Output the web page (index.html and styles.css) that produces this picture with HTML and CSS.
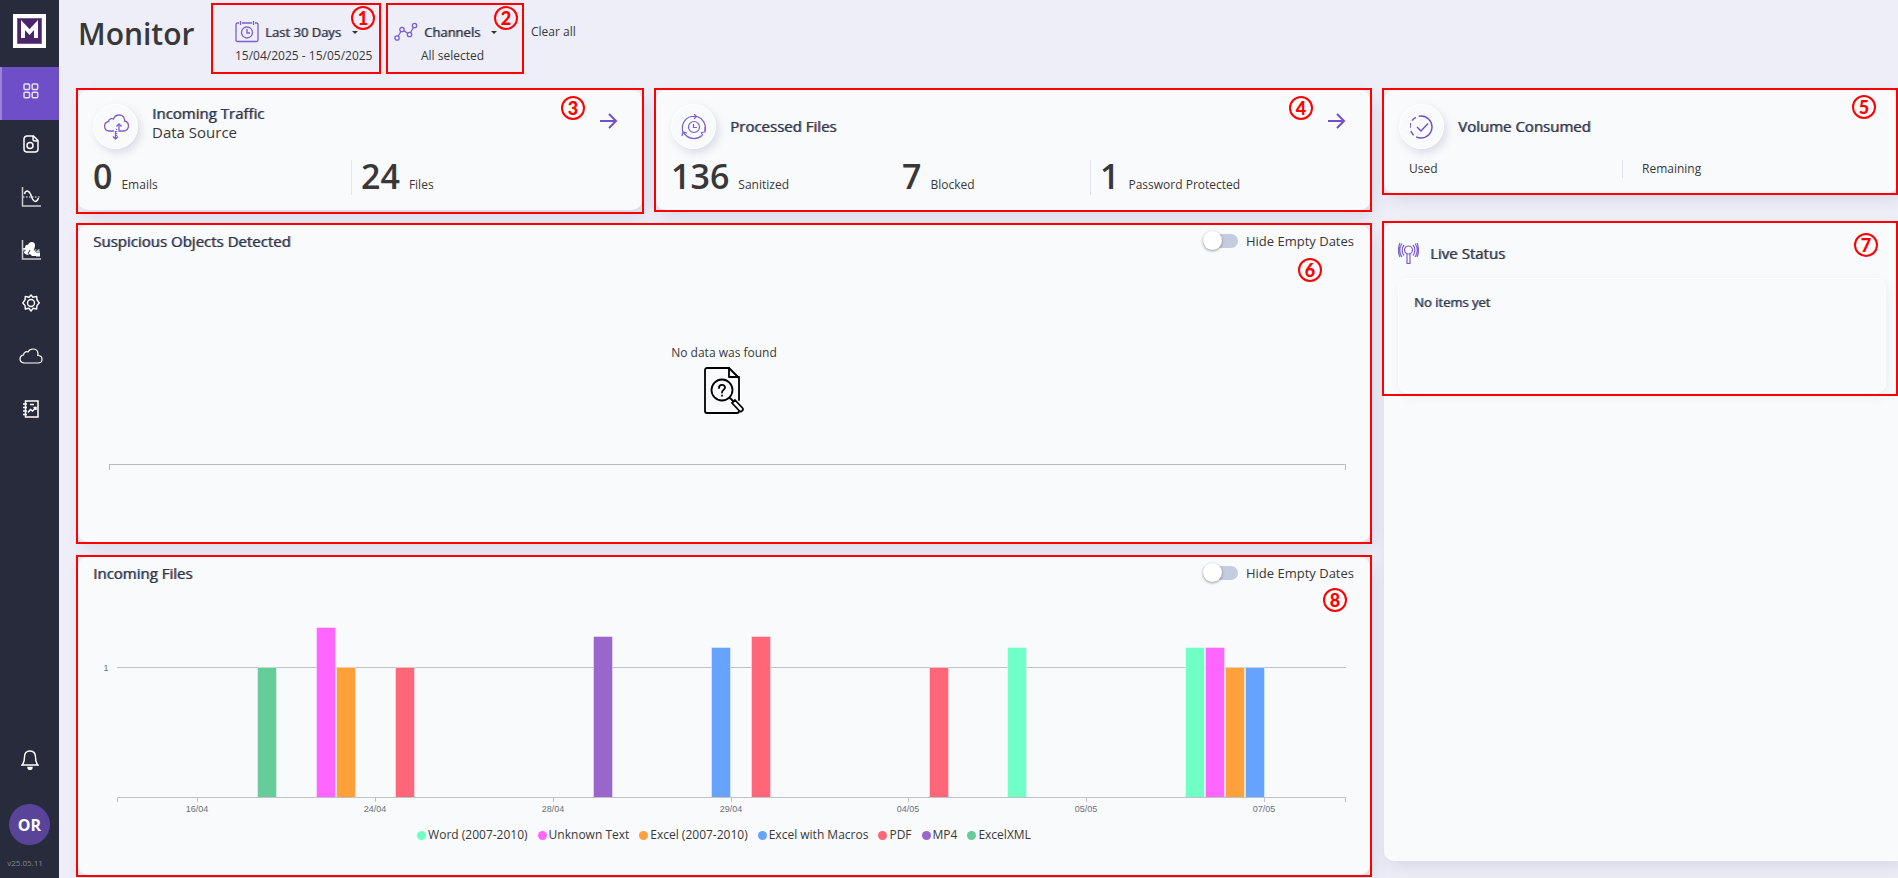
FILE: index.html
```html
<!DOCTYPE html>
<html lang="en">
<head>
    <meta charset="UTF-8">
    <meta name="viewport" content="width=device-width, initial-scale=1.0">
    <title>Monitor</title>
    <link rel="stylesheet" href="styles.css">
</head>
<body>
<nav class="sidebar">
    <a href="#" class="logo" aria-label="Home">
        <svg width="33" height="34" viewBox="0 0 33 34">
            <rect width="33" height="34" fill="#fff"/>
            <rect x="4" y="4" width="25" height="26" fill="#7d5b92"/>
            <rect x="5" y="5" width="23" height="24" fill="#4b2569"/>
            <path d="M10 24V11l6.500 7 6.500-7v13" fill="none" stroke="#fff" stroke-width="4"/>
        </svg>
    </a>
    <a href="#" class="nav-item active" aria-label="Monitor">
        <svg width="16" height="16" viewBox="0 0 16 16" fill="none" stroke="#e6def7" stroke-width="1.500">
            <rect x="1" y="1" width="5.500" height="5.500" rx="1"/>
            <rect x="9.200" y="1" width="5.500" height="5.500" rx="1"/>
            <rect x="1" y="9.200" width="5.500" height="5.500" rx="1"/>
            <rect x="9.200" y="9.200" width="5.500" height="5.500" rx="1"/>
        </svg>
    </a>
    <a href="#" class="nav-item" aria-label="Files">
        <svg width="16" height="18" viewBox="0 0 16 18" fill="none" stroke="#fff" stroke-width="1.500">
            <path d="M4 1h6.500L15 5.500V14a3 3 0 0 1-3 3H4a3 3 0 0 1-3-3V4a3 3 0 0 1 3-3z"/>
            <path d="M10 1v3a2 2 0 0 0 2 2h3"/>
            <circle cx="7" cy="10.500" r="3"/>
        </svg>
    </a>
    <a href="#" class="nav-item" aria-label="Analytics">
        <svg width="20" height="20" viewBox="0 0 20 20" fill="none" stroke="#fff">
            <path d="M1.500 0v19H20" stroke-width="1.500" stroke="#c9cad0"/>
            <path d="M2 10h18" stroke-dasharray="1.500 1.500"/>
            <path d="M3.500 7c1-4 4-4 6 0l2 5c1.500 3 4 4 6-1" stroke-width="1.500"/>
        </svg>
    </a>
    <a href="#" class="nav-item" aria-label="User report">
        <svg width="20" height="20" viewBox="0 0 20 20" fill="none" stroke="#fff">
            <path d="M1.500 0v19H20" stroke-width="1.500" stroke="#c9cad0"/>
            <path d="M2 10h18" stroke-dasharray="1.500 1.500"/>
            <path d="M4 8c0-3 2-4 3-3 1-4 7-4 7 0 0 2-1 4-1 5l2 2v4h-4l-2-2-3 1-3-2c0-2 1-2 2-3-2 0-3-1-3-2z" fill="#fff" stroke="none"/>
            <path d="M9 10l-2 4" stroke="#282b3c"/>
            <rect x="15" y="13" width="4" height="3.500" fill="#fff" stroke="none"/>
            <path d="M16 13v-2h2v2"/>
        </svg>
    </a>
    <a href="#" class="nav-item" aria-label="Settings">
        <svg width="18" height="18" viewBox="0 0 18 18" fill="none" stroke="#fff" stroke-width="1.400" stroke-linejoin="round">
            <path d="M9 1l2 2.300 3.700-.9.200 3.200L17.200 9l-2.300 2.600-.2 3.400-3.700-.7L9 17l-2-2.700-3.700.7-.2-3.400L.8 9l2.300-3.400.2-3.200 3.700.9z"/>
            <circle cx="9" cy="9" r="3.500"/>
        </svg>
    </a>
    <a href="#" class="nav-item" aria-label="Cloud">
        <svg width="24" height="16" viewBox="0 0 24 16" fill="none" stroke="#fff" stroke-width="1.200">
            <path d="M5.500 15C2.500 15 1 13 1 11s1.500-4 3.500-4C4.500 4.500 7 3 9 4c1-2 3-3 5-3 3 0 5 2 5 5 0 .5 0 1-.2 1.500C21.500 7.500 23 9 23 11.200S21.500 15 19 15z"/>
        </svg>
    </a>
    <a href="#" class="nav-item" aria-label="Reports">
        <svg width="16" height="18" viewBox="0 0 16 18" fill="none" stroke="#fff" stroke-width="1.500">
            <rect x="2.500" y="1" width="12.500" height="16"/>
            <path d="M0 4h4M0 7.500h4M0 11h4M0 14.500h4M7 4.500h4"/>
            <path d="M5 12.500l2.500-3 2 1.500L13 7.500M10.500 7.500H13V10"/>
        </svg>
    </a>
    <div class="sidebar-bottom">
        <a href="#" class="bell" aria-label="Notifications">
            <svg width="18" height="20" viewBox="0 0 18 20" fill="none" stroke="#fff" stroke-width="1.400">
                <path d="M1 15h16c-2-2-2.500-4-2.500-8 0-4-2.500-6-5.500-6S3.500 3 3.500 7c0 4-.5 6-2.500 8z"/>
                <path d="M7 17.500a2 2 0 0 0 4 0z" fill="#fff"/>
            </svg>
        </a>
        <button class="avatar">OR</button>
        <div class="version">v25.05.11</div>
    </div>
</nav>

<main class="main">
    <header class="header">
        <h1>Monitor</h1>
        <div class="filter filter-date">
            <button class="filter-button">
                <svg width="24" height="22" viewBox="0 0 24 22" fill="none" stroke="#7c5fd0">
                    <path d="M4 2H2.500A1.500 1.500 0 0 0 1 3.500v15A1.500 1.500 0 0 0 2.500 20.500h19a1.500 1.500 0 0 0 1.500-1.500V3.500A1.500 1.500 0 0 0 21.500 2H20M7 2h10M5.500 0v4M18.500 0v4" stroke-width="1.300"/>
                    <circle cx="12" cy="11.500" r="5.500" stroke-width="1.300"/>
                    <path d="M12 8v4h3" stroke-width="1.300"/>
                </svg>
                <span class="bold">Last 30 Days</span>
                <span class="caret"></span>
            </button>
            <div class="filter-value">15/04/2025 - 15/05/2025</div>
            <span class="callout"><b class="badge badge-corner">1</b></span>
        </div>
        <div class="filter filter-channels">
            <button class="filter-button">
                <svg width="24" height="20" viewBox="0 0 24 20" fill="none" stroke="#7c5fd0" stroke-width="1.300">
                    <circle cx="3" cy="16" r="2.200"/>
                    <circle cx="8" cy="7.500" r="2.200"/>
                    <circle cx="15.500" cy="12.500" r="2.200"/>
                    <circle cx="20.500" cy="3.500" r="2.200"/>
                    <path d="M4.200 14L7 9.500M10 8.700l3.700 2.500M16.500 10.500l3-5"/>
                </svg>
                <span class="bold">Channels</span>
                <span class="caret"></span>
            </button>
            <div class="filter-value">All selected</div>
            <span class="callout"><b class="badge badge-corner">2</b></span>
        </div>
        <button class="clear">Clear all</button>
    </header>

    <div class="content">
        <div class="left">
            <div class="summary">
                <!-- incoming traffic -->
                <section class="card stat-card">
                    <div class="stat-head">
                        <span class="round">
                            <svg width="26" height="26" viewBox="0 0 26 26" fill="none" stroke="#7c5fd0" stroke-width="1.300">
                                <path d="M11 17H6a4.800 4.800 0 0 1-.5-9.500C6 5 8.500 4 10.500 5c1-2.500 3-4 5.500-4 3.500 0 6 2.500 5.500 6 2.500.5 4 2.500 4 5s-2 5-5 5h-4.500V10"/>
                                <path d="M13.500 12.500L16 10l2.500 2.500M12.500 17v8M10 22.500l2.500 2.500 2.500-2.500"/>
                                <path d="M13.500 15v8" stroke-dasharray="1 1"/>
                            </svg>
                        </span>
                        <div class="stat-title two-lines">
                            <h2>Incoming Traffic</h2>
                            <p>Data Source</p>
                        </div>
                        <a href="#" class="arrow" aria-label="Open incoming traffic">
                            <svg width="18" height="16" viewBox="0 0 18 16" fill="none" stroke="#7150c9" stroke-width="2"><path d="M0 8h16M9 1l7 7-7 7"/></svg>
                        </a>
                    </div>
                    <div class="stats traffic-stats">
                        <div class="stat"><span class="number">0</span><span class="label">Emails</span></div>
                        <div class="stat divided"><span class="number">24</span><span class="label">Files</span></div>
                    </div>
                    <span class="callout callout-low"><b class="badge badge-arrow">3</b></span>
                </section>

                <!-- processed files -->
                <section class="card stat-card">
                    <div class="stat-head">
                        <span class="round">
                            <svg width="26" height="26" viewBox="0 0 26 26" fill="none" stroke="#7c5fd0" stroke-width="1.200">
                                <path d="M2 18A12 12 0 0 1 10 2.500M16 2.500A12 12 0 0 1 24 17M21 21.500A12 12 0 0 1 5 21.500"/>
                                <path d="M10 2.500h5M13 0l2.500 2.500L13 5M24 13v5l-4 .5M22 21.500l-2-3M1 22l1-4 4 1M2 18l3 3.500"/>
                                <circle cx="13" cy="13" r="5.500"/>
                                <path d="M12.500 10v3.500H16"/>
                            </svg>
                        </span>
                        <div class="stat-title"><h2>Processed Files</h2></div>
                        <a href="#" class="arrow" aria-label="Open processed files">
                            <svg width="18" height="16" viewBox="0 0 18 16" fill="none" stroke="#7150c9" stroke-width="2"><path d="M0 8h16M9 1l7 7-7 7"/></svg>
                        </a>
                    </div>
                    <div class="stats processed-stats">
                        <div class="stat"><span class="number">136</span><span class="label">Sanitized</span></div>
                        <div class="stat"><span class="number">7</span><span class="label">Blocked</span></div>
                        <div class="stat divided"><span class="number">1</span><span class="label">Password Protected</span></div>
                    </div>
                    <span class="callout"><b class="badge badge-arrow">4</b></span>
                </section>
            </div>

            <!-- suspicious objects -->
            <section class="card chart-card">
                <div class="chart-head">
                    <h2>Suspicious Objects Detected</h2>
                    <label class="toggle"><input type="checkbox">Hide Empty Dates</label>
                </div>
                <div class="empty">
                    <p>No data was found</p>
                    <svg width="40" height="48" viewBox="0 0 40 48" fill="none" stroke="#000" stroke-width="1.800" stroke-linecap="round" stroke-linejoin="round">
                        <path d="M35 33V11L25 1H3a2 2 0 0 0-2 2v41a2 2 0 0 0 2 2h30a2 2 0 0 0 2-2"/>
                        <path d="M25 1v9h10"/>
                        <circle cx="18" cy="23" r="10.500"/>
                        <path d="M26 31l3 3"/>
                        <path d="M28 36l3-3 7.500 8c1.500 2-1.500 4.500-3 3z" fill="#fff"/>
                        <path d="M15 21c0-4 6-4 6-.5 0 2.500-3 2.200-3 5M18 28.500v.3"/>
                    </svg>
                    <div class="empty-axis"></div>
                </div>
                <span class="callout"><b class="badge badge-suspicious">6</b></span>
            </section>

            <!-- incoming files -->
            <section class="card chart-card">
                <div class="chart-head">
                    <h2>Incoming Files</h2>
                    <label class="toggle"><input type="checkbox">Hide Empty Dates</label>
                </div>
                <svg class="chart" viewBox="0 0 1262 236">
                    <path class="grid-line" d="M24 84.500H1253"/>
                    <text x="13" y="88" text-anchor="middle">1</text>
                    <g class="bars">
                        <rect x="164.500" y="84.500" width="19" height="130" fill="#66cc99"/>
                        <rect x="223.500" y="44.500" width="19" height="170" fill="#ff66ff"/>
                        <rect x="243.500" y="84.500" width="19" height="130" fill="#ffa03a"/>
                        <rect x="302.500" y="84.500" width="19" height="130" fill="#ff6677"/>
                        <rect x="500.500" y="53.500" width="19" height="161" fill="#9966cc"/>
                        <rect x="618.500" y="64.500" width="19" height="150" fill="#66a3ff"/>
                        <rect x="658.500" y="53.500" width="19" height="161" fill="#ff6677"/>
                        <rect x="836.500" y="84.500" width="19" height="130" fill="#ff6677"/>
                        <rect x="914.500" y="64.500" width="19" height="150" fill="#70ffc4"/>
                        <rect x="1092.500" y="64.500" width="19" height="150" fill="#70ffc4"/>
                        <rect x="1112.500" y="64.500" width="19" height="150" fill="#ff66ff"/>
                        <rect x="1132.500" y="84.500" width="19" height="130" fill="#ffa03a"/>
                        <rect x="1152.500" y="84.500" width="19" height="130" fill="#66a3ff"/>
                    </g>
                    <path class="axis-line" d="M24.500 219v-4.500H1252.500v4.500M104.500 214v5M282.500 214v5M460.500 214v5M638.500 214v5M815.500 214v5M993.500 214v5M1171.500 214v5"/>
                    <g text-anchor="middle">
                        <text x="104" y="229">16/04</text>
                        <text x="282" y="229">24/04</text>
                        <text x="460" y="229">28/04</text>
                        <text x="638" y="229">29/04</text>
                        <text x="815" y="229">04/05</text>
                        <text x="993" y="229">05/05</text>
                        <text x="1171" y="229">07/05</text>
                    </g>
                </svg>
                <ul class="legend">
                    <li class="word">Word (2007-2010)</li>
                    <li class="unknown">Unknown Text</li>
                    <li class="excel">Excel (2007-2010)</li>
                    <li class="macros">Excel with Macros</li>
                    <li class="pdf">PDF</li>
                    <li class="mp4">MP4</li>
                    <li class="xml">ExcelXML</li>
                </ul>
                <span class="callout"><b class="badge badge-incoming">8</b></span>
            </section>
        </div>

        <aside class="right">
            <section class="card stat-card">
                <div class="stat-head">
                    <span class="round">
                        <svg width="24" height="24" viewBox="0 0 24 24" fill="none" stroke="#6f4fc8" stroke-width="1.400">
                            <path d="M11 1a11 11 0 1 1 0 22"/>
                            <path d="M11 23A11 11 0 0 1 11 1" stroke-dasharray="5 3"/>
                            <path d="M7 12l4 4 7-7.500"/>
                        </svg>
                    </span>
                    <div class="stat-title"><h2>Volume Consumed</h2></div>
                </div>
                <div class="volume">
                    <span>Used</span>
                    <span class="remaining">Remaining</span>
                </div>
                <span class="callout callout-edge"><b class="badge badge-side">5</b></span>
            </section>

            <section class="card live-card">
                <div class="live">
                    <div class="live-head">
                        <svg width="21" height="22" viewBox="0 0 21 22" fill="none" stroke="#7c5fd0" stroke-width="1.200">
                            <circle cx="10.500" cy="8" r="4"/>
                            <path d="M9 12v9.300h3V12"/>
                            <path d="M6 3c-2.500 3-2.500 7.500 0 10.500M15 3c2.500 3 2.500 7.500 0 10.500M4 1.500c-3 4-3 9.500 0 13.500M17 1.500c3 4 3 9.500 0 13.500M2 1c-2 4-2 10.500 0 14M19 1c2 4 2 10.500 0 14"/>
                        </svg>
                        <h2>Live Status</h2>
                    </div>
                    <div class="live-panel">
                        <p class="bold">No items yet</p>
                    </div>
                    <span class="callout callout-edge"><b class="badge badge-live">7</b></span>
                </div>
            </section>
        </aside>
    </div>
</main>
</body>
</html>
```

FILE: styles.css
```css
* {
    box-sizing: border-box;
}
body {
    margin: 0;
    display: flex;
    min-height: 100vh;
    background-color: #edeef7;
    color: #383838;
    font-family: "Open Sans", sans-serif;
    font-size: 12px;
}
h1, h2, p, ul {
    margin: 0;
    padding: 0;
}
button {
    padding: 0;
    border: none;
    background: none;
    color: inherit;
    font: inherit;
    cursor: pointer;
}
svg {
    display: block;
    flex-shrink: 0;
}

/* sidebar */
.sidebar {
    display: flex;
    flex-direction: column;
    flex-shrink: 0;
    width: 59px;
    background-color: #282b3c;
}
.logo {
    padding: 14px 13px 19px;
}
.nav-item {
    display: flex;
    align-items: center;
    justify-content: center;
    height: 53px;
    padding: 0 0 5px 2px;
}
.nav-item.active {
    padding-left: 0;
    border-left: 2px solid #9b80dc;
    background-color: #6f4fc7;
}
.sidebar-bottom {
    display: flex;
    flex-direction: column;
    align-items: center;
    margin-top: auto;
    padding-bottom: 9px;
}
.avatar {
    width: 41px;
    height: 41px;
    margin: 34px 0 12px;
    border-radius: 50%;
    background-color: #5a4499;
    color: #fff;
    font-size: 16px;
    font-weight: bold;
}
.version {
    padding-right: 9px;
    color: #85868e;
    font-size: 8px;
    line-height: 12px;
}

/* header */
.main {
    flex: 1;
    min-width: 0;
    padding-left: 19px;
}
.header {
    display: flex;
    align-items: flex-start;
    height: 90px;
    padding-top: 3px;
}
.header h1 {
    width: 133px;
    padding-top: 11px;
    font-size: 30px;
    font-weight: 600;
    line-height: 40px;
}
.filter {
    position: relative;
    height: 71px;
    padding-top: 18px;
}
.filter-date {
    width: 170px;
    padding-left: 24px;
}
.filter-channels {
    width: 138px;
    margin-left: 5px;
    padding-left: 8px;
}
.filter-button {
    display: flex;
    align-items: center;
    gap: 6px;
    height: 22px;
    font-size: 13px;
}
.filter-value {
    margin-top: 5px;
    line-height: 16px;
}
.filter-channels .filter-value {
    padding-left: 27px;
}
.caret {
    margin-left: 5px;
    border: 3px solid transparent;
    border-top-color: #333;
    border-bottom: none;
}
.clear {
    margin: 20px 0 0 7px;
    line-height: 18px;
}
/* regular glyphs thickened by one pixel */
.bold, h2 {
    font-weight: normal;
    color: #30364a;
    text-shadow: 1px 0 0 rgba(48, 54, 74, 0.6);
}
h2 {
    font-size: 15px;
    line-height: 19px;
}

/* cards */
.content {
    display: grid;
    grid-template-columns: 1292fr 514fr;
    gap: 14px;
}
.left {
    display: flex;
    flex-direction: column;
    gap: 15px;
    min-width: 0;
}
.summary {
    display: grid;
    grid-template-columns: 564fr 714fr;
    gap: 14px;
}
.card {
    position: relative;
    border-radius: 10px;
    background-color: #f8fafc;
    box-shadow: 4px 6px 16px rgba(55, 55, 110, 0.12);
}
.stat-card {
    padding: 14px 15px 15px;
}
.stat-head {
    display: flex;
    align-items: center;
}
.round {
    display: flex;
    align-items: center;
    justify-content: center;
    width: 45px;
    height: 45px;
    border: 1px solid #fff;
    border-radius: 50%;
    box-shadow: 3px 4px 8px rgba(55, 55, 90, 0.15);
}
.stat-title {
    flex: 1;
    padding-left: 14px;
}
.two-lines {
    align-self: flex-start;
}
.two-lines p {
    font-size: 15px;
    line-height: 19px;
}
.arrow {
    align-self: flex-start;
    padding: 9px 9px 0 0;
}
.stats {
    display: grid;
    height: 35px;
    margin-top: 11px;
}
.traffic-stats {
    grid-template-columns: 258fr 276fr;
}
.processed-stats {
    grid-template-columns: 231fr 188fr 265fr;
}
.stat {
    display: flex;
    align-items: baseline;
    gap: 9px;
    white-space: nowrap;
}
.divided {
    padding-left: 9px;
    border-left: 1px solid #e2e3f0;
}
.number {
    font-size: 34px;
    font-weight: 600;
    line-height: 33px;
}

/* charts */
.chart-card {
    padding: 6px 15px 31px;
}
.chart-head {
    display: flex;
    align-items: center;
    justify-content: space-between;
    height: 20px;
}
.toggle {
    display: flex;
    align-items: center;
    gap: 8px;
    padding-right: 1px;
    font-size: 13px;
    line-height: 18px;
}
.toggle input {
    appearance: none;
    position: relative;
    width: 35px;
    height: 14px;
    margin: 0;
    border-radius: 7px;
    background-color: #c6cce0;
}
.toggle input::before {
    content: "";
    position: absolute;
    top: -3px;
    left: 0;
    width: 19px;
    height: 19px;
    border-radius: 50%;
    background-color: #fff;
    box-shadow: 0 1px 3px rgba(0, 0, 0, 0.4);
}
.toggle input:checked::before {
    left: 16px;
}
.empty {
    display: flex;
    flex-direction: column;
    align-items: center;
    padding: 93px 0 41px;
}
.empty p {
    margin-bottom: 5px;
    line-height: 18px;
}
.empty-axis {
    align-self: stretch;
    height: 6px;
    margin: 49px 9px 0 16px;
    border: 1px solid #babbc0;
    border-bottom: none;
}
.chart {
    width: 100%;
    font-family: "Liberation Sans", Arial, sans-serif;
    font-size: 9px;
    fill: #6e7079;
}
.grid-line, .axis-line {
    fill: none;
    stroke: #bfc3c9;
}
.bars {
    stroke: rgba(255, 255, 255, 0.4);
}
.legend {
    display: flex;
    justify-content: center;
    gap: 10px;
    margin-top: 7px;
    line-height: 18px;
    list-style: none;
}
.legend li {
    display: flex;
    align-items: center;
    gap: 2px;
}
.legend li::before {
    content: "";
    width: 9px;
    height: 9px;
    border-radius: 50%;
    background-color: #70ffc4;
}
.legend .unknown::before {
    background-color: #ff66ff;
}
.legend .excel::before {
    background-color: #ffa03a;
}
.legend .macros::before {
    background-color: #66a3ff;
}
.legend .pdf::before {
    background-color: #ff6677;
}
.legend .mp4::before {
    background-color: #9966cc;
}
.legend .xml::before {
    background-color: #66cc99;
}

/* right column */
.right {
    display: flex;
    flex-direction: column;
    gap: 30px;
    padding-bottom: 14px;
}
.volume {
    display: grid;
    grid-template-columns: 213fr 261fr;
    margin-top: 11px;
    padding-left: 10px;
    line-height: 18px;
}
.remaining {
    padding-left: 19px;
    border-left: 1px solid #e2e3f0;
}
.live-card {
    flex: 1;
    border-radius: 10px 0 0 10px;
}
.live {
    position: relative;
    padding: 19px 12px 1px 14px;
}
.live-head {
    display: flex;
    align-items: center;
    gap: 11px;
}
.live-panel {
    height: 115px;
    margin-top: 14px;
    padding: 14px 15px;
    border: 1px solid #fff;
    border-radius: 10px;
    box-shadow: 2px 4px 12px rgba(55, 55, 90, 0.06);
}
.live-panel p {
    font-size: 13px;
    line-height: 18px;
}

/* numbered red frames over the page */
.callout {
    position: absolute;
    inset: -2px;
    border: 2px solid #ff0000;
    pointer-events: none;
}
.filter .callout {
    inset: 0;
}
.callout-low {
    bottom: -4px;
}
.callout-edge {
    right: 0;
}
.badge {
    position: absolute;
    width: 24px;
    height: 24px;
    border: 2px solid #ff0000;
    border-radius: 50%;
    color: #ff0000;
    font-family: Lato, sans-serif;
    font-size: 18px;
    font-weight: 900;
    line-height: 20px;
    text-align: center;
}
.badge-corner {
    top: 1px;
    right: 4px;
}
.badge-arrow {
    top: 6px;
    right: 57px;
}
.badge-side {
    top: 5px;
    right: 20px;
}
.badge-live {
    top: 10px;
    right: 18px;
}
.badge-suspicious {
    top: 33px;
    right: 48px;
}
.badge-incoming {
    top: 31px;
    right: 23px;
}
```
